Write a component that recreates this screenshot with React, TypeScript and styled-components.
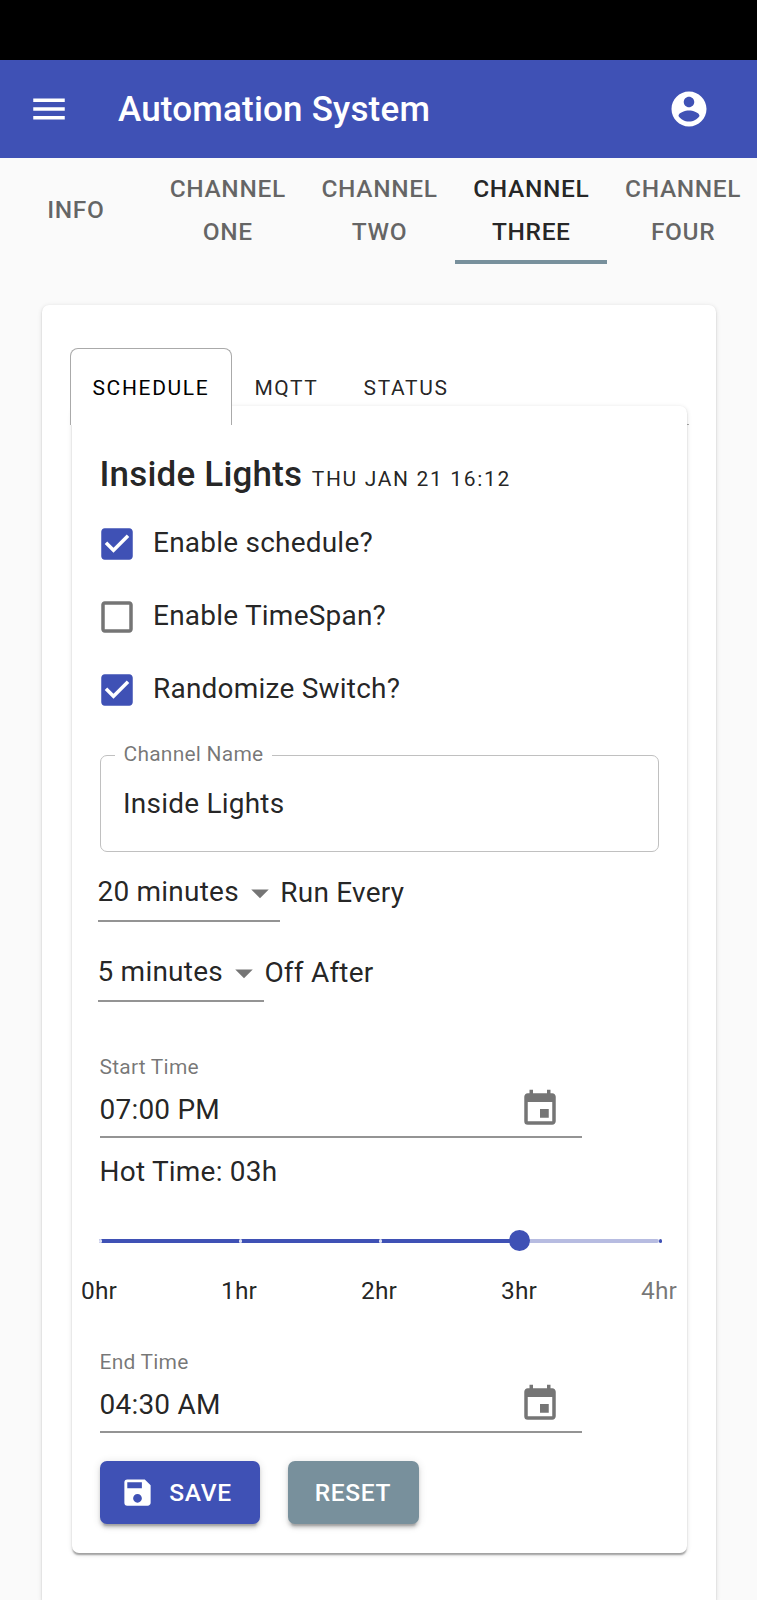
import React from 'react';
import styled, { createGlobalStyle } from 'styled-components';
import { MdArrowDropDown, MdEvent, MdMenu, MdSave } from 'react-icons/md';

const color = {
  primary: '#3f51b5',
  secondary: '#78909c',
  text: 'rgba(0, 0, 0, 0.87)',
  muted: 'rgba(0, 0, 0, 0.54)',
  line: '#949494',
};

const GlobalStyle = createGlobalStyle`
  *, *::before, *::after { box-sizing: border-box; }
  body {
    margin: 0;
    background: #fafafa;
    color: ${color.text};
    font-family: Roboto, "Liberation Sans", sans-serif;
    font-size: 28px;
    letter-spacing: 0.0078em;
  }
  button { font-family: inherit; }
  svg { display: block; flex: none; }
`;

const Page = styled.div`
  display: flex;
  flex-direction: column;
  height: 1600px;
  overflow: hidden;
`;

const StatusBar = styled.div`
  flex: none;
  height: 60px;
  background: #000;
`;

const AppBar = styled.header`
  flex: none;
  display: flex;
  align-items: center;
  height: 98px;
  padding: 0 47px 1px 28px;
  background: ${color.primary};
  color: #fff;
`;

const Title = styled.h1`
  flex: 1;
  margin: 1px 0 0 48px;
  font-size: 35px;
  font-weight: 500;
  letter-spacing: 0.0055em;
`;

const ChannelTabs = styled.nav`
  flex: none;
  display: grid;
  grid-template-columns: repeat(5, 1fr);
  height: 106px;
  margin-right: -2px;
`;

const ChannelTab = styled.button<{ $active?: boolean }>`
  display: flex;
  align-items: center;
  justify-content: center;
  padding: 1px 16px 0;
  border: 0;
  border-bottom: 4px solid ${(p) => (p.$active ? color.secondary : 'transparent')};
  background: none;
  color: ${(p) => (p.$active ? color.text : 'rgba(0, 0, 0, 0.6)')};
  font-size: 24.5px;
  font-weight: 500;
  line-height: 43px;
  letter-spacing: 0.026em;
  text-transform: uppercase;
`;

const OuterCard = styled.main`
  flex: 1;
  margin: 41px 41px 0 42px;
  padding: 43px 27px 0 28px;
  border-radius: 7px 7px 0 0;
  background: #fff;
  box-shadow: 0 3.5px 1.75px -1.75px rgba(0, 0, 0, 0.2), 0 1.75px 1.75px rgba(0, 0, 0, 0.14),
    0 1.75px 5px rgba(0, 0, 0, 0.12);
`;

const SectionTabs = styled.div`
  display: flex;
  height: 77px;
  border-bottom: 1px solid #aaa;
`;

const SectionTab = styled.button<{ $active?: boolean }>`
  position: relative;
  z-index: 1;
  height: 77px;
  padding: 1px 21.5px 0;
  border: 1px solid ${(p) => (p.$active ? '#aaa' : 'transparent')};
  border-bottom: 0;
  border-radius: 8px 8px 0 0;
  background: ${(p) => (p.$active ? '#fff' : 'none')};
  color: ${(p) => (p.$active ? '#000' : color.text)};
  font-size: 21px;
  letter-spacing: 0.0785em;
  text-transform: uppercase;
`;

const Panel = styled.section`
  position: relative;
  display: flex;
  flex-direction: column;
  height: 1147px;
  margin: -19px 2px 0;
  padding: 41px 28px 0 27.5px;
  border-radius: 7px;
  background: #fff;
  box-shadow: 0 3.5px 1.75px -1.75px rgba(0, 0, 0, 0.2), 0 1.75px 1.75px rgba(0, 0, 0, 0.14),
    0 1.75px 5px rgba(0, 0, 0, 0.12);
`;

const Heading = styled.h2`
  display: flex;
  align-items: baseline;
  gap: 9.5px;
  margin: 0;
  font-size: 35px;
  font-weight: 500;
  line-height: 56px;
  letter-spacing: 0.0055em;
`;

const DateText = styled.small`
  font-size: 21px;
  font-weight: 400;
  letter-spacing: 0.0785em;
  text-transform: uppercase;
`;

const CheckRow = styled.label<{ $checked: boolean }>`
  display: flex;
  align-items: center;
  gap: 15.5px;
  height: 73px;
  margin-left: -4px;
  svg { color: ${(p) => (p.$checked ? color.primary : color.muted)}; }
`;

const CheckLabel = styled.span`
  padding-bottom: 3px;
`;

const OutlinedField = styled.div`
  position: relative;
  display: flex;
  align-items: center;
  height: 97px;
  margin-top: 29px;
  padding-left: 22.5px;
  border: 1px solid #c0c0c0;
  border-radius: 7px;
`;

const FloatingLabel = styled.label`
  position: absolute;
  top: -15px;
  left: 14px;
  padding: 0 9px;
  background: #fff;
  color: ${color.muted};
  font-size: 21px;
  line-height: 26px;
`;

const SelectRow = styled.div`
  display: flex;
  height: 54px;
  margin: 16px 0 10px -2px;
  line-height: 49px;
`;

const Select = styled.div`
  display: flex;
  height: 54px;
  border-bottom: 2px solid ${color.line};
  line-height: 48px;
  svg { margin: 4px -0.5px 0 0; color: ${color.muted}; }
`;

const TimeField = styled.div<{ $top: number }>`
  width: 482px;
  height: 84px;
  margin-top: ${(p) => p.$top}px;
  border-bottom: 2px solid ${color.line};
`;

const TimeLabel = styled.label`
  display: block;
  color: ${color.muted};
  font-size: 21px;
  line-height: 26px;
`;

const TimeValue = styled.div`
  display: flex;
  align-items: center;
  justify-content: space-between;
  height: 42px;
  margin-top: 8px;
  padding-right: 21px;
  svg { color: ${color.muted}; }
`;

const HotTime = styled.p`
  margin: 9px 0 0;
  line-height: 50px;
`;

const Slider = styled.div`
  position: relative;
  width: 560px;
  height: 113px;
  margin: 0 0 39px -0.5px;
`;

const Rail = styled.span<{ $fill?: boolean }>`
  position: absolute;
  top: 42px;
  left: 0;
  width: 100%;
  height: 4px;
  border-radius: 2px;
  background: ${(p) => (p.$fill ? color.primary : '#b7bce1')};
`;

const Mark = styled.span<{ $passed: boolean }>`
  position: absolute;
  top: 42px;
  width: 3px;
  height: 4px;
  border-radius: 2px;
  background: ${(p) => (p.$passed ? '#dfe2f5' : color.primary)};
`;

const MarkLabel = styled.span<{ $passed: boolean }>`
  position: absolute;
  top: 79px;
  transform: translateX(-50%);
  color: ${(p) => (p.$passed ? color.text : color.muted)};
  font-size: 24.5px;
  line-height: 30px;
`;

const Thumb = styled.span`
  position: absolute;
  top: 33px;
  width: 21px;
  height: 21px;
  margin-left: -10.5px;
  border-radius: 50%;
  background: ${color.primary};
`;

const Actions = styled.div`
  display: flex;
  gap: 28px;
  margin-top: 28px;
`;

const Button = styled.button<{ $tone: string; $width: number }>`
  display: flex;
  align-items: center;
  justify-content: center;
  width: ${(p) => p.$width}px;
  height: 63px;
  padding: 0;
  border: 0;
  border-radius: 7px;
  background: ${(p) => p.$tone};
  color: #fff;
  font-size: 24.5px;
  font-weight: 500;
  letter-spacing: 0.0275em;
  text-transform: uppercase;
  box-shadow: 0 5px 2px -3.5px rgba(0, 0, 0, 0.2), 0 3.5px 3.5px rgba(0, 0, 0, 0.14),
    0 1.75px 9px rgba(0, 0, 0, 0.12);
  svg { margin: 0 14px 0 -7px; }
`;

const iconPaths = {
  account:
    'M12 2C6.48 2 2 6.48 2 12s4.48 10 10 10 10-4.48 10-10S17.52 2 12 2zm0 3c1.66 0 3 1.34 3 3s-1.34 3-3 3-3-1.34-3-3 1.34-3 3-3zm0 14.2c-2.5 0-4.71-1.28-6-3.22.03-1.99 4-3.08 6-3.08 1.99 0 5.97 1.09 6 3.08-1.29 1.94-3.5 3.22-6 3.22z',
  checked:
    'M19 3H5c-1.11 0-2 .9-2 2v14c0 1.1.89 2 2 2h14c1.11 0 2-.9 2-2V5c0-1.1-.89-2-2-2zm-9 14l-5-5 1.41-1.41L10 14.17l7.59-7.59L19 8l-9 9z',
  unchecked:
    'M19 5v14H5V5h14m0-2H5c-1.1 0-2 .9-2 2v14c0 1.1.9 2 2 2h14c1.1 0 2-.9 2-2V5c0-1.1-.9-2-2-2z',
};

function Icon({ name }: { name: keyof typeof iconPaths }) {
  return (
    <svg width="42" height="42" viewBox="0 0 24 24" fill="currentColor" aria-hidden="true">
      <path d={iconPaths[name]} />
    </svg>
  );
}

const channels = ['Info', 'Channel One', 'Channel Two', 'Channel Three', 'Channel Four'];
const sections = ['Schedule', 'MQTT', 'Status'];
const options = [
  { label: 'Enable schedule?', checked: true },
  { label: 'Enable TimeSpan?', checked: false },
  { label: 'Randomize Switch?', checked: true },
];
const intervals = [
  { value: '20 minutes', label: 'Run Every' },
  { value: '5 minutes', label: 'Off After' },
];
const hours = [0, 1, 2, 3, 4];
const maxHours = 4;
const hotTime = 3;

const percent = (hour: number) => `${(hour / maxHours) * 100}%`;

function TimePicker({ label, value, top }: { label: string; value: string; top: number }) {
  return (
    <TimeField $top={top}>
      <TimeLabel>{label}</TimeLabel>
      <TimeValue>
        {value}
        <MdEvent size={42} />
      </TimeValue>
    </TimeField>
  );
}

export default function App() {
  return (
    <Page>
      <GlobalStyle />
      <StatusBar />
      <AppBar>
        <MdMenu size={42} />
        <Title>Automation System</Title>
        <Icon name="account" />
      </AppBar>
      <ChannelTabs>
        {channels.map((name) => (
          <ChannelTab key={name} $active={name === 'Channel Three'}>
            {name}
          </ChannelTab>
        ))}
      </ChannelTabs>
      <OuterCard>
        <SectionTabs>
          {sections.map((name) => (
            <SectionTab key={name} $active={name === 'Schedule'}>
              {name}
            </SectionTab>
          ))}
        </SectionTabs>
        <Panel>
          <Heading>
            Inside Lights <DateText>Thu Jan 21 16:12</DateText>
          </Heading>
          {options.map(({ label, checked }) => (
            <CheckRow key={label} $checked={checked}>
              <Icon name={checked ? 'checked' : 'unchecked'} />
              <CheckLabel>{label}</CheckLabel>
            </CheckRow>
          ))}
          <OutlinedField>
            <FloatingLabel>Channel Name</FloatingLabel>
            Inside Lights
          </OutlinedField>
          {intervals.map(({ value, label }) => (
            <SelectRow key={label}>
              <Select>
                {value}
                <MdArrowDropDown size={42} />
              </Select>
              {label}
            </SelectRow>
          ))}
          <TimePicker label="Start Time" value="07:00 PM" top={42} />
          <HotTime>Hot Time: 03h</HotTime>
          <Slider>
            <Rail />
            <Rail $fill style={{ width: percent(hotTime) }} />
            {hours.map((hour) => (
              <React.Fragment key={hour}>
                <Mark $passed={hour <= hotTime} style={{ left: percent(hour) }} />
                <MarkLabel $passed={hour <= hotTime} style={{ left: percent(hour) }}>
                  {hour}hr
                </MarkLabel>
              </React.Fragment>
            ))}
            <Thumb style={{ left: percent(hotTime) }} />
          </Slider>
          <TimePicker label="End Time" value="04:30 AM" top={0} />
          <Actions>
            <Button $tone={color.primary} $width={160}>
              <MdSave size={35} />
              Save
            </Button>
            <Button $tone={color.secondary} $width={131}>
              Reset
            </Button>
          </Actions>
        </Panel>
      </OuterCard>
    </Page>
  );
}
